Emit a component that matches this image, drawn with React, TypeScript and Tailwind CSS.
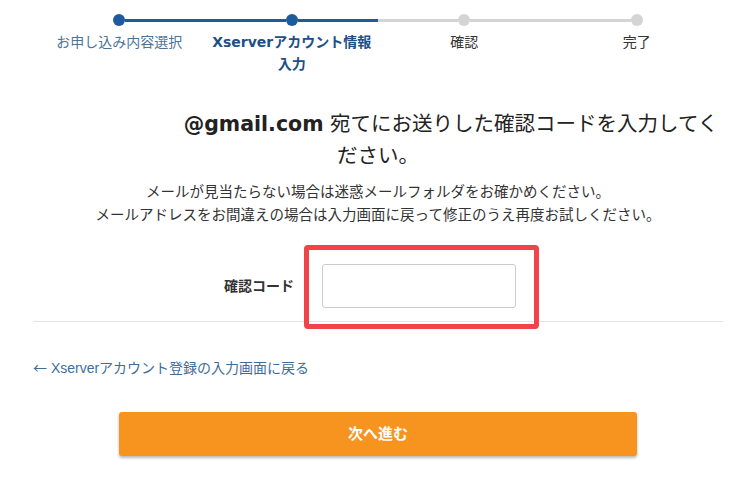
import React from "react";

const jp = { fontFamily: '"DejaVu Sans", "Noto Sans CJK JP", sans-serif' };
const jpArial = { fontFamily: '"Liberation Sans", "Noto Sans CJK JP", sans-serif' };

type Step = { label: string; state: "done" | "active" | "todo"; left: string; right: string };

const steps: Step[] = [
  { label: "お申し込み内容選択", state: "done", left: "", right: "bg-[#1f5a9e]" },
  { label: "Xserverアカウント情報入力", state: "active", left: "bg-[#1f5a9e]", right: "bg-[#1f5a9e]" },
  { label: "確認", state: "todo", left: "bg-[#d4d4d4]", right: "bg-[#d4d4d4]" },
  { label: "完了", state: "todo", left: "bg-[#d4d4d4]", right: "" },
];

export default function App() {
  return (
    <div className="w-[750px] h-[477px] bg-white overflow-hidden" style={jp}>
      <div className="ml-[33px] w-[690px] pt-[14px]">
        {/* Stepper */}
        <div className="grid grid-cols-4">
          {steps.map((s, i) => (
            <div key={i} className="flex flex-col items-center">
              <div className="flex items-center w-full h-[12px]">
                <div className={`flex-1 h-[3px] ${s.left}`} />
                <div
                  className={`w-[12px] h-[12px] rounded-full shrink-0 ${
                    s.state === "todo" ? "bg-[#d4d4d4]" : "bg-[#1f5a9e]"
                  }`}
                />
                <div className={`flex-1 h-[3px] ${s.right}`} />
              </div>
              <div
                className={`mt-[5px] text-[14px] leading-[22px] text-center ${
                  s.state === "done"
                    ? "text-[#4e7496]"
                    : s.state === "active"
                    ? "text-[#1d4f88] font-bold"
                    : "text-[#333333]"
                }`}
              >
                {s.label}
              </div>
            </div>
          ))}
        </div>

        {/* Heading */}
        <h1 className="mt-[33px] text-center text-[20.5px] leading-[32px] text-[#222222]">
          <span className="inline-block w-[146px]" />
          <span className="font-bold">@gmail.com</span> 宛てにお送りした確認コードを入力してください。
        </h1>

        <div className="mt-[9px] text-center text-[14.5px] leading-[23px] text-[#333333]">
          <p>メールが見当たらない場合は迷惑メールフォルダをお確かめください。</p>
          <p>メールアドレスをお間違えの場合は入力画面に戻って修正のうえ再度お試しください。</p>
        </div>

        {/* Form row */}
        <div className="mt-[37px] flex items-center">
          <div className="w-[261px] text-right text-[14px] font-bold text-[#333333]">確認コード</div>
          <div className="relative ml-[28px]">
            <input
              type="text"
              className="block w-[194px] h-[44px] border border-[#cccccc] rounded-[3px] bg-white outline-none"
            />
            <div className="absolute -left-[18px] -top-[19px] w-[235px] h-[84px] border-[5px] border-[#f1434a] rounded-[4px] pointer-events-none" />
          </div>
        </div>

        <div className="mt-[13px] border-t border-[#e3e3e3]" />

        <div className="mt-[35px] text-[14px] leading-[20px] text-[#3f6d99]" style={jpArial}>
          <span style={{ fontFamily: '"Noto Sans CJK JP", sans-serif' }}>←</span> Xserverアカウント登録の入力画面に戻る
        </div>

        <button
          type="button"
          className="mt-[34px] mx-auto block w-[518px] h-[44px] rounded-[3px] bg-[#f7941f] text-white font-bold text-[15px] shadow-[0_2px_3px_rgba(0,0,0,0.28)]"
          style={jp}
        >
          次へ進む
        </button>
      </div>
    </div>
  );
}
